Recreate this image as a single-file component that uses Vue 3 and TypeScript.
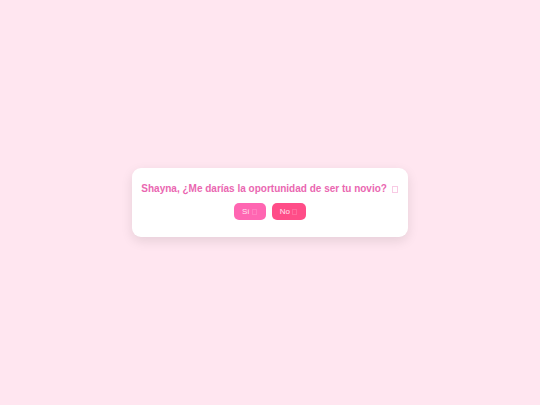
<script setup lang="ts">
import { ref } from 'vue'

type Answer = 'yes' | 'no'

const answer = ref<Answer | null>(null)

const choices: { id: Answer; label: string }[] = [
  { id: 'yes', label: 'Sí' },
  { id: 'no', label: 'No' },
]
</script>

<template>
  <main class="page">
    <section class="card">
      <h1 class="question">
        Shayna, ¿Me darías la oportunidad de ser tu novio?
        <span class="glyph" aria-hidden="true"></span>
      </h1>
      <div class="choices">
        <button
          v-for="choice in choices"
          :key="choice.id"
          type="button"
          class="choice"
          :class="choice.id"
          @click="answer = choice.id"
        >
          {{ choice.label }}
          <span class="glyph" aria-hidden="true"></span>
        </button>
      </div>
    </section>
  </main>
</template>

<style>
body {
  background: #ffe6f0;
}
</style>

<style scoped>
.page {
  min-height: 100vh;
  display: flex;
  align-items: center;
  justify-content: center;
  font-family: "Liberation Sans", Arial, sans-serif;
}

.card {
  box-sizing: border-box;
  padding: 14px 8px 17px;
  border-radius: 9px;
  background: #fff;
  box-shadow: 0 4px 12px rgba(0, 0, 0, 0.1);
  text-align: center;
}

.question {
  margin: 0 0 8px;
  padding: 0 1px;
  font-size: 10px;
  line-height: 13px;
  font-weight: 700;
  color: #ea67b1;
}

.glyph {
  display: inline-block;
  box-sizing: border-box;
  width: 6px;
  height: 7px;
  margin: 0 1px 0 2px;
  border: 1px solid currentColor;
  vertical-align: -1px;
  opacity: 0.35;
}

.choices {
  display: flex;
  justify-content: center;
  gap: 6px;
}

.choice {
  padding: 0 8px;
  border: 0;
  border-radius: 5px;
  font-family: inherit;
  font-size: 8px;
  line-height: 17px;
  color: #ffe3f0;
  cursor: pointer;
}

.choice .glyph {
  width: 5px;
  height: 6px;
  margin: 0 1px 0 0;
  opacity: 0.2;
}

.yes {
  background: #ff66b2;
}

.no {
  background: #ff4d88;
}
</style>
